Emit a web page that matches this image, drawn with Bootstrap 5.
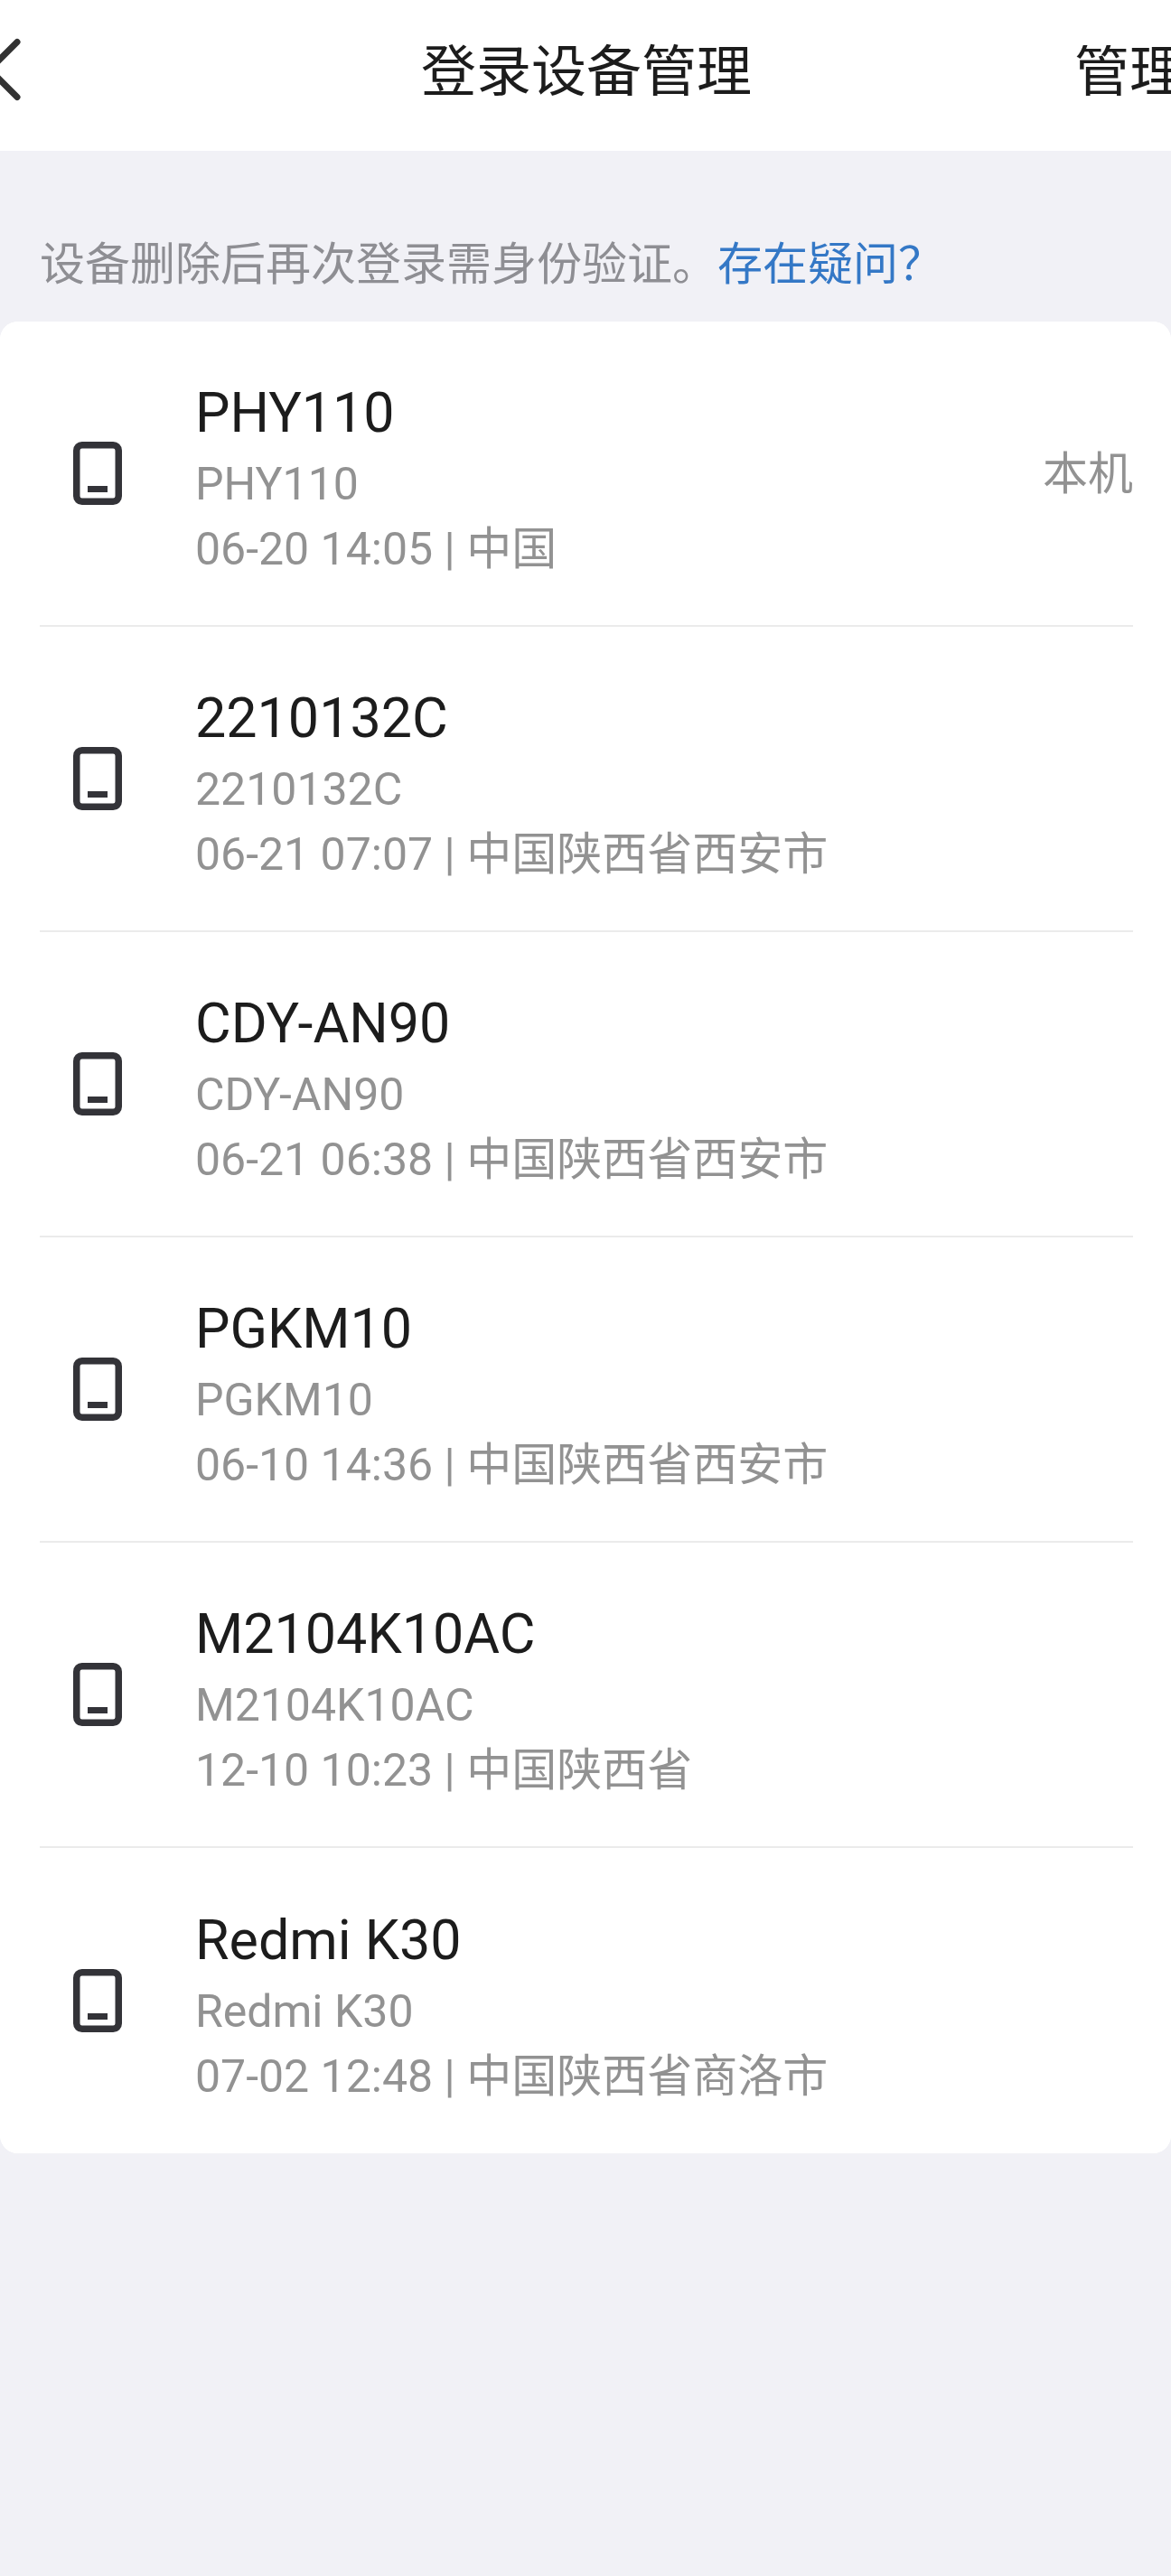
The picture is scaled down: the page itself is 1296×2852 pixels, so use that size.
<!DOCTYPE html>
<html lang="zh-CN">
<head>
    <meta charset="UTF-8">
    <meta name="viewport" content="width=device-width, initial-scale=1.0">
    <title>登录设备管理</title>
    <link href="https://cdn.jsdelivr.net/npm/bootstrap@5.3.0/dist/css/bootstrap.min.css" rel="stylesheet">
    <style>
        body {
            background-color: #f1f1f6;
            font-family: Roboto, "Noto Sans CJK SC", sans-serif;
            overflow-x: hidden;
            min-height: 2852px;
        }
        .top-bar {
            height: 167px;
            background-color: #fff;
            font-size: 61px;
            line-height: 1;
            color: #1c1c1c;
            padding-bottom: 6px;
        }
        .top-side {
            width: 466px;
            flex: none;
            white-space: nowrap;
            overflow: hidden;
        }
        .top-title {
            width: 366px;
            flex: none;
        }
        .top-action {
            width: 464px;
            padding-left: 357px;
        }
        .back-arrow {
            display: block;
            width: 30px;
            height: 80px;
        }
        .tip-text {
            height: 189px;
            padding: 99px 0 0 44px;
            font-size: 50px;
            line-height: 54px;
            color: #8e8e93;
        }
        .tip-text a {
            color: #3478c6;
            text-decoration: none;
        }
        .device-card {
            border: 0;
            border-radius: 20px;
            overflow: hidden;
        }
        .device-row {
            height: 338px;
            padding: 0 42px 0 44px;
        }
        .device-inner {
            height: 100%;
            border-bottom: 2px solid #ebebeb;
        }
        .device-row:last-child .device-inner {
            border-bottom: 0;
        }
        .device-icon {
            width: 54px;
            height: 70px;
            margin: 0 81px 0 37px;
            flex-shrink: 0;
        }
        .device-text {
            padding-top: 10px;
        }
        .device-name {
            font-size: 61px;
            line-height: 86px;
            color: #1c1c1c;
        }
        .device-meta {
            font-size: 50px;
            line-height: 72px;
            color: #929292;
        }
        .device-current {
            font-size: 50px;
            color: #929292;
            padding-top: 2px;
        }
    </style>
</head>
<body>
    <!-- Top bar -->
    <header class="top-bar d-flex align-items-center">
        <div class="top-side">
            <svg class="back-arrow" viewBox="0 0 30 80" fill="none" stroke="#333" stroke-width="7" stroke-linecap="round">
                <path d="M19 5.5 L-11.5 36 L19 66.5"/>
            </svg>
        </div>
        <div class="top-title">登录设备管理</div>
        <div class="top-side top-action">管理</div>
    </header>

    <p class="tip-text mb-0">设备删除后再次登录需身份验证。<a href="#">存在疑问？</a></p>

    <!-- Device list -->
    <div class="card device-card">
        <div class="list-group list-group-flush" id="deviceList"></div>
    </div>

    <script src="https://cdn.jsdelivr.net/npm/bootstrap@5.3.0/dist/js/bootstrap.bundle.min.js"></script>
    <script>
        const devices = [
            { name: "PHY110", seen: "06-20 14:05 | 中国", current: true },
            { name: "2210132C", seen: "06-21 07:07 | 中国陕西省西安市" },
            { name: "CDY-AN90", seen: "06-21 06:38 | 中国陕西省西安市" },
            { name: "PGKM10", seen: "06-10 14:36 | 中国陕西省西安市" },
            { name: "M2104K10AC", seen: "12-10 10:23 | 中国陕西省" },
            { name: "Redmi K30", seen: "07-02 12:48 | 中国陕西省商洛市" }
        ];

        const phoneIcon = `
            <svg class="device-icon" viewBox="0 0 54 70" fill="none">
                <rect x="3.75" y="3.75" width="46.5" height="62.5" rx="6" stroke="#333338" stroke-width="7.5"/>
                <rect x="16" y="49" width="22" height="7" fill="#333338"/>
            </svg>`;

        document.getElementById("deviceList").innerHTML = devices.map(device => `
            <div class="list-group-item device-row border-0">
                <div class="device-inner d-flex align-items-center">
                    ${phoneIcon}
                    <div class="device-text flex-grow-1">
                        <div class="device-name">${device.name}</div>
                        <div class="device-meta">${device.name}</div>
                        <div class="device-meta">${device.seen}</div>
                    </div>
                    ${device.current ? '<div class="device-current">本机</div>' : ''}
                </div>
            </div>`).join("");
    </script>
</body>
</html>
